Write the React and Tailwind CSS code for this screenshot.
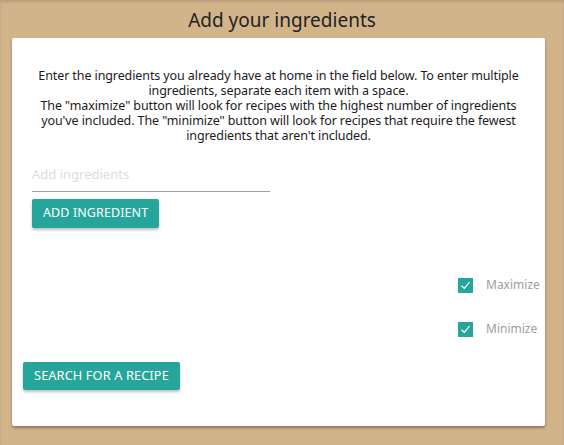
export default function App() {
  return (
    <div
      className="min-h-[445px] w-full bg-[#d2b48b] pb-[19px] shadow-[inset_0_2px_3px_rgba(0,0,0,0.12)]"
      style={{ fontFamily: '"Noto Sans", "Open Sans", sans-serif' }}
    >
      <h1 className="h-[38px] pt-[6px] text-center text-[19px] leading-[28px] text-[#222]">
        Add your ingredients
      </h1>

      <div className="mx-[12px] w-[533px] h-[388px] bg-white rounded-[2px] shadow-[0_2px_3px_rgba(0,0,0,0.35)] flex flex-col">
        <p className="mt-[30px] px-[20px] text-center text-[12.5px] leading-[15px] text-[#1d1a22] tracking-[-0.1px]">
          Enter the ingredients you already have at home in the field below. To enter multiple ingredients, separate each item with a space.
          <br />
          The "maximize" button will look for recipes with the highest number of ingredients you've included. The "minimize" button will look for recipes that require the fewest ingredients that aren't included.
        </p>

        <div className="mt-[16px] ml-[20px] w-[238px] border-b border-[#9e9e9e] h-[33px] flex items-center">
          <span className="text-[13px] text-[#ddd]">Add ingredients</span>
        </div>

        <button className="mt-[7px] ml-[20px] self-start h-[29px] px-[11px] bg-[#26a69a] text-white text-[12.5px] tracking-[0.1px] rounded-[2px] shadow-[0_2px_3px_rgba(0,0,0,0.25)]">
          ADD INGREDIENT
        </button>

        <div className="mt-[48px] mr-[8px] flex flex-col items-end gap-[26px]">
          <label className="flex items-center gap-[13px]">
            <CheckBox />
            <span className="text-[12px] text-[#9e9e9e] w-[51px]">Maximize</span>
          </label>
          <label className="flex items-center gap-[13px]">
            <CheckBox />
            <span className="text-[12px] text-[#9e9e9e] w-[51px]">Minimize</span>
          </label>
        </div>

        <button className="mt-[24px] ml-[11px] self-start h-[28px] px-[11px] bg-[#26a69a] text-white text-[12.8px] tracking-[0.1px] rounded-[2px] shadow-[0_2px_3px_rgba(0,0,0,0.25)]">
          SEARCH FOR A RECIPE
        </button>
      </div>
    </div>
  );
}

function CheckBox() {
  return (
    <span className="w-[15px] h-[15px] bg-[#26a69a] flex items-center justify-center">
      <svg width="15" height="15" viewBox="0 0 15 15">
        <path d="M3.5 7.8 L6.3 10.3 L11.5 4.2" fill="none" stroke="white" strokeWidth="1.2" />
      </svg>
    </span>
  );
}
